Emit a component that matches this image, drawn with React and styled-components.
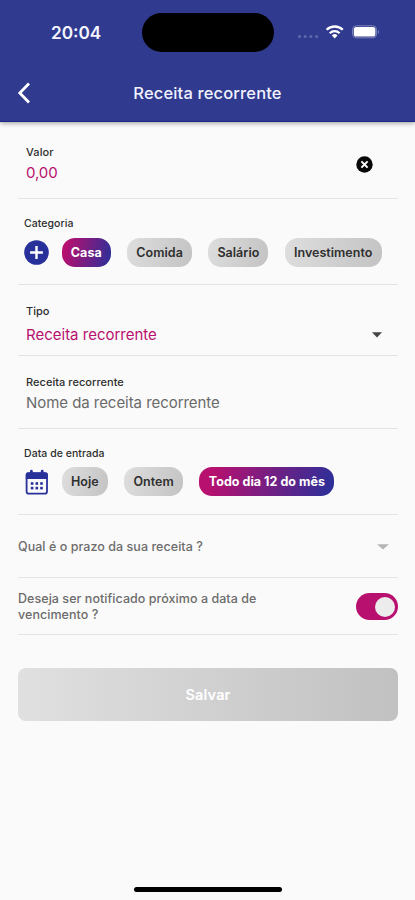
import React, { useState } from 'react';
import styled, { createGlobalStyle } from 'styled-components';

const color = {
  blue: '#303a8e',
  deepBlue: '#28309a',
  pink: '#b8106f',
  page: '#fafafa',
  line: '#e4e4e4',
};

const categories = [
  { name: 'Casa', width: 49 },
  { name: 'Comida', width: 65 },
  { name: 'Salário', width: 60 },
  { name: 'Investimento', width: 97 },
];

const dates = [
  { name: 'Hoje', width: 46 },
  { name: 'Ontem', width: 59 },
  { name: 'Todo dia 12 do mês', width: 135 },
];

const App = () => {
  const [ category, setCategory ] = useState( 'Casa' )
  const [ date, setDate ] = useState( 'Todo dia 12 do mês' )
  const [ notify, setNotify ] = useState( true )

  return (
    <Screen>
      <GlobalStyle />
      <Header>
        <StatusBar>
          <Clock>20:04</Clock>
          <Island />
          <StatusIcons />
        </StatusBar>
        <NavBar>
          <BackButton aria-label='Voltar'>
            <svg width='14' height='22' viewBox='0 0 14 22'>
              <path d='M12 1.6 L2.8 11 L12 20.4' fill='none' stroke='#fff' strokeWidth='2.8' />
            </svg>
          </BackButton>
          <Title>Receita recorrente</Title>
        </NavBar>
      </Header>

      <Form>
        <Row $height={77} $top={22} $indent={8}>
          <Split $right={25}>
            <div>
              <Label $spacing='0.1px'>Valor</Label>
              <Value $spacing='-0.1px' $gap={3}>0,00</Value>
            </div>
            <ClearIcon width='17' height='17' viewBox='0 0 17 17'>
              <circle cx='8.5' cy='8.5' r='8.2' fill='#080808' />
              <path d='M5.4 5.4 L11.6 11.6 M11.6 5.4 L5.4 11.6' stroke='#fff' strokeWidth='2' />
            </ClearIcon>
          </Split>
        </Row>

        <Row $height={86} $top={17} $indent={6}>
          <Label $small>Categoria</Label>
          <Chips $gap={16.3} $top={6}>
            <PlusIcon />
            {categories.map( ({ name, width }) => (
              <Chip key={name} $width={width} $active={name === category} onClick={() => setCategory( name )}>
                {name}
              </Chip>
            ))}
          </Chips>
        </Row>

        <Row $height={71} $top={18} $indent={8}>
          <Label>Tipo</Label>
          <Split $right={16} $top={6}>
            <Value $gap={0}>Receita recorrente</Value>
            <Caret color='#444' width={10} />
          </Split>
        </Row>

        <Row $height={73} $top={18} $indent={8}>
          <Label>Receita recorrente</Label>
          <Value $muted $spacing='-0.05px'>Nome da receita recorrente</Value>
        </Row>

        <Row $height={86} $top={17} $indent={6}>
          <Label $small>Data de entrada</Label>
          <Chips $gap={16.3} $top={5}>
            <CalendarIcon />
            {dates.map( ({ name, width }) => (
              <Chip key={name} $width={width} $active={name === date} onClick={() => setDate( name )}>
                {name}
              </Chip>
            ))}
          </Chips>
        </Row>

        <Row $height={63} $top={24}>
          <Split $right={9}>
            <Question>Qual é o prazo da sua receita ?</Question>
            <Caret color='#b5b5b5' width={12} />
          </Split>
        </Row>

        <Row $height={57} $top={13}>
          <Split $align='flex-start'>
            <Question>
              Deseja ser notificado próximo a data de<br />vencimento ?
            </Question>
            <Toggle role='switch' aria-checked={notify} $on={notify} onClick={() => setNotify( !notify )} />
          </Split>
        </Row>

        <SaveButton>Salvar</SaveButton>
      </Form>

      <HomeBar />
    </Screen>
  );
};

const StatusIcons = () => (
  <svg width='88' height='20' viewBox='0 0 88 20'>
    <g fill='#6069ac'>
      <circle cx='4.5' cy='14.5' r='1.5' />
      <circle cx='10.2' cy='14.5' r='1.5' />
      <circle cx='15.9' cy='14.5' r='1.5' />
      <circle cx='21.6' cy='14.5' r='1.5' />
    </g>
    <g fill='none' stroke='#fff' strokeWidth='2.3'>
      <path d='M31.6 7.8 A11.6 11.6 0 0 1 47.8 7.8' />
      <path d='M34.8 11.2 A7 7 0 0 1 44.6 11.2' />
    </g>
    <path d='M39.7 16.4 L36.9 13.4 A4 4 0 0 1 42.5 13.4 Z' fill='#fff' />
    <rect x='57.6' y='3.8' width='24' height='12' rx='3.8' fill='none' stroke='#7f86bd' />
    <rect x='58.8' y='5' width='21.6' height='9.6' rx='2.6' fill='#fff' />
    <path d='M83 8 a2.2 2.2 0 0 1 0 3.8 z' fill='#7f86bd' />
  </svg>
);

const PlusIcon = () => (
  <svg width='25' height='26' viewBox='0 0 25 26'>
    <circle cx='12.5' cy='12.5' r='12.3' fill={color.deepBlue} />
    <path d='M12.5 6.1 V18.9 M6.1 12.5 H18.9' stroke='#fff' strokeWidth='2.4' />
  </svg>
);

const CalendarIcon = () => (
  <svg width='25' height='26' viewBox='0 0 25 26'>
    <path
      d='M7.4 2.2 V5 M18.2 2.2 V5'
      stroke={color.deepBlue}
      strokeWidth='2.8'
      strokeLinecap='round'
    />
    <rect x='2.6' y='4.2' width='20.4' height='20.4' rx='2.2' fill='#fafafa' stroke={color.deepBlue} strokeWidth='1.8' />
    <path d='M1.8 5.4 q0 -1.8 1.8 -1.8 h18.4 q1.8 0 1.8 1.8 v4.6 h-22 z' fill={color.deepBlue} />
    <g fill={color.deepBlue}>
      {[ 6.8, 11.5, 16.2 ].map( x => (
        [ 13.2, 17.8 ].map( y => <rect key={`${ x }-${ y }`} x={x} y={y} width='2.6' height='2.6' /> )
      ))}
    </g>
  </svg>
);

const Caret = ({ color, width }) => (
  <svg width={width} height='6' viewBox='0 0 10 6' preserveAspectRatio='none'>
    <path d='M0 0.3 H10 L5 5.6 Z' fill={color} />
  </svg>
);

const GlobalStyle = createGlobalStyle`
    * {
        box-sizing: border-box;
    }

    body {
        margin: 0;
        background: ${ color.page };
        font-family: Inter, 'Liberation Sans', sans-serif;
    }

    button {
        border: 0;
        padding: 0;
        font-family: inherit;
        cursor: pointer;
    }

    svg {
        display: block;
        flex-shrink: 0;
    }
`

const Screen = styled.div`
    width: 415px;
    height: 900px;
    display: flex;
    flex-direction: column;
    background: ${ color.page };
    overflow: hidden;
`

const Header = styled.header`
    height: 122px;
    flex-shrink: 0;
    background: ${ color.blue };
    border-bottom: 1px solid #1c2785;
    box-shadow: 0 1px 5px rgba(0, 0, 0, .4);
`

const StatusBar = styled.div`
    height: 64px;
    display: grid;
    grid-template-columns: 142px 132px 1fr;
    align-items: center;

    svg {
        margin-left: 21px;
    }
`

const Clock = styled.span`
    padding-left: 51px;
    color: #f4f5ff;
    font-size: 17.2px;
    font-weight: 600;
`

const Island = styled.div`
    height: 39px;
    border-radius: 20px;
    background: #000;
`

const NavBar = styled.div`
    height: 58px;
    display: grid;
    grid-template-columns: 60px 1fr 60px;
    align-items: center;
`

const BackButton = styled.button`
    padding-left: 17px;
    background: none;
`

const Title = styled.h1`
    margin: 0;
    color: #f1f2ff;
    font-size: 16.5px;
    font-weight: 500;
    letter-spacing: 0.15px;
    text-align: center;
    white-space: nowrap;
`

const Form = styled.main`
    flex: 1;
    padding: 0 17px 0 18px;
`

const Row = styled.section`
    height: ${ ({ $height }) => $height }px;
    padding-top: ${ ({ $top }) => $top }px;
    padding-left: ${ ({ $indent = 0 }) => $indent }px;
    border-bottom: 1px solid ${ color.line };
`

const Split = styled.div`
    display: flex;
    align-items: ${ ({ $align = 'center' }) => $align };
    justify-content: space-between;
    padding-right: ${ ({ $right = 0 }) => $right }px;
    padding-top: ${ ({ $top = 0 }) => $top }px;
`

const ClearIcon = styled.svg`
    margin-top: 2px;
`

const Label = styled.div`
    color: #2e2e2e;
    font-size: ${ ({ $small }) => $small ? 10.5 : 11 }px;
    font-weight: 500;
    line-height: 16px;
    letter-spacing: ${ ({ $small, $spacing }) => $spacing || ( $small ? '0.05px' : '0.04px' ) };
`

const Value = styled.div`
    margin-top: ${ ({ $gap = 3 }) => $gap }px;
    color: ${ ({ $muted }) => $muted ? '#6a6a6a' : color.pink };
    font-size: 15px;
    line-height: 20px;
    letter-spacing: ${ ({ $spacing = '0' }) => $spacing };
`

const Chips = styled.div`
    display: flex;
    align-items: center;
    margin-top: ${ ({ $top }) => $top }px;
    margin-right: -17px;
    gap: ${ ({ $gap }) => $gap }px;

    svg {
        margin-right: -3.5px;
    }
`

const Chip = styled.button`
    width: ${ ({ $width }) => $width }px;
    height: 29px;
    flex-shrink: 0;
    border-radius: 13px;
    background: ${ ({ $active }) => $active
      ? `linear-gradient(105deg, ${ color.pink } 10%, ${ color.deepBlue })`
      : 'linear-gradient(105deg, #dedede, #c3c3c3)' };
    color: ${ ({ $active }) => $active ? '#fff' : '#2f2f2f' };
    font-size: 12.5px;
    font-weight: ${ ({ $active }) => $active ? 700 : 600 };
    letter-spacing: 0.03px;
    white-space: nowrap;
`

const Question = styled.p`
    margin: 0;
    color: #6c6c6c;
    font-size: 12.5px;
    font-weight: 500;
    line-height: 16px;
    letter-spacing: 0.05px;
`

const Toggle = styled.button`
    width: 42px;
    height: 27px;
    display: flex;
    align-items: center;
    justify-content: ${ ({ $on }) => $on ? 'flex-end' : 'flex-start' };
    margin-top: 2px;
    padding: 0 3px;
    border-radius: 14px;
    background: ${ ({ $on }) => $on ? color.pink : '#bbb' };

    &::before {
        content: '';
        width: 20px;
        height: 20px;
        border-radius: 50%;
        background: #ececec;
    }
`

const SaveButton = styled.button`
    width: 100%;
    height: 53px;
    margin-top: 33px;
    border-radius: 8px;
    background: linear-gradient(90deg, #e0e0e0, #c1c1c1);
    color: #fff;
    font-size: 14.5px;
    font-weight: 600;
    letter-spacing: 0.15px;
`

const HomeBar = styled.div`
    width: 148px;
    height: 5px;
    flex-shrink: 0;
    margin: 0 0 8px 134px;
    border-radius: 3px;
    background: #000;
`

export default App;
